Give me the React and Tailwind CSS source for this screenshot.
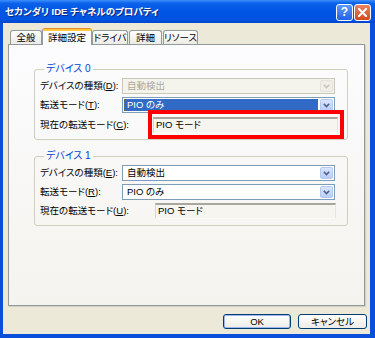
import React from "react";

function Chevron({ color }) {
  return (
    <svg width="7" height="5" viewBox="0 0 7 5">
      <path d="M0.8 0.8 L3.5 3.6 L6.2 0.8" fill="none" stroke={color} strokeWidth="1.6" />
    </svg>
  );
}

function Combo({ text, variant }) {
  const outer =
    variant === "disabled"
      ? "flex h-[16px] w-[213px] items-stretch border border-[#c9c7ba] bg-[#f4f3ec]"
      : "flex h-[16px] w-[213px] items-stretch border border-[#7f9db9] bg-white";
  const inner =
    variant === "selected"
      ? "flex flex-1 items-center border border-dotted border-[#7a6d3a] bg-[#316ac5] pl-[2px] text-white"
      : variant === "disabled"
      ? "flex flex-1 items-center pl-[3px] text-[#aca899]"
      : "flex flex-1 items-center pl-[3px] text-black";
  const btn =
    variant === "disabled"
      ? "m-[1px] flex w-[13px] items-center justify-center rounded-[2px] border border-[#e4e2d8] bg-[#efeee7]"
      : "m-[1px] flex w-[13px] items-center justify-center rounded-[2px] border border-[#b5c8f2] bg-[linear-gradient(to_bottom,#dbe6fd,#b9cdf8)]";
  return (
    <div className={outer}>
      <div className="flex flex-1 p-[1px]">
        <div className={inner}>{text}</div>
      </div>
      <div className={btn}>
        <Chevron color={variant === "disabled" ? "#c9c6b6" : "#4d6185"} />
      </div>
    </div>
  );
}

function Field({ text, width }) {
  return (
    <div
      className={`flex h-[16px] items-center border-t-2 border-l border-r border-b border-t-[#a9a79c] border-l-[#d8d5ca] border-r-[#e9e7dd] border-b-[#fbfbf8] bg-[#f6f5f0] pl-[2px] text-black ${width}`}
    >
      {text}
    </div>
  );
}

function Group({ title, rows, className }) {
  return (
    <fieldset className={`w-[314px] rounded-[3px] border border-[#d0d0bf] pb-[6px] pl-[5px] pt-[3px] ${className}`}>
      <legend className="ml-[4px] px-[2px] text-[10px] leading-[12px] text-[#0046d5]">{title}</legend>
      <div className="flex flex-col gap-[3px]">{rows}</div>
    </fieldset>
  );
}

function Label({ children, mn, w }) {
  return (
    <div className={`${w} shrink-0 whitespace-nowrap leading-[12px]`}>
      {children}(<u>{mn}</u>):
    </div>
  );
}

export default function App() {
  return (
    <div className="flex h-[338px] w-[375px] flex-col overflow-hidden bg-[#0a4fdc] font-['Liberation_Sans','Noto_Sans_CJK_JP',sans-serif] text-[9.5px] text-black [font-feature-settings:'palt']">
      {/* Title bar */}
      <div className="flex h-[23px] shrink-0 items-center bg-[linear-gradient(to_bottom,#3d8ffa_0%,#0b62ea_14%,#0055e4_50%,#0052e0_85%,#0046cc_100%)] pl-[5px] pr-[4px]">
        <div className="flex-1 whitespace-nowrap text-[9.5px] font-bold leading-none text-white [text-shadow:1px_1px_0_#0a2a80]">
          セカンダリ IDE チャネルのプロパティ
        </div>
        <div className="flex gap-[1px] pt-[1px]">
          <div className="flex h-[17px] w-[17px] items-center justify-center rounded-[3px] border border-white bg-[linear-gradient(to_bottom,#5b9bfb,#2361e6)] text-[12px] font-bold leading-none text-white">
            ?
          </div>
          <div className="flex h-[17px] w-[17px] items-center justify-center rounded-[3px] border border-white bg-[linear-gradient(to_bottom,#ea8560,#d24a1c)]">
            <svg width="9" height="9" viewBox="0 0 9 9">
              <path d="M1 1 L8 8 M8 1 L1 8" stroke="white" strokeWidth="2" strokeLinecap="square" />
            </svg>
          </div>
        </div>
      </div>

      {/* Client area */}
      <div className="mb-[4px] ml-[3px] mr-[5px] flex flex-1 flex-col bg-[#ece9d8] pt-[5px]">
        {/* Tabs */}
        <div className="relative z-10 ml-[7px] flex h-[16px] items-end">
          <div className="flex h-[14px] w-[32px] items-center justify-center whitespace-nowrap rounded-t-[3px] border border-b-0 border-[#919b9c] bg-[linear-gradient(to_bottom,#fefefe,#ecebe5)] leading-none">
            全般
          </div>
          <div className="-mb-[1px] flex h-[17px] w-[50px] flex-col rounded-t-[3px] border border-b-0 border-[#919b9c] border-t-[#e68b2c] bg-[#fcfcfe]">
            <div className="h-[2px] bg-[#ffc73c]" />
            <div className="flex flex-1 items-center justify-center whitespace-nowrap leading-none">詳細設定</div>
          </div>
          <div className="flex h-[14px] w-[36px] items-center justify-center whitespace-nowrap rounded-t-[3px] border border-b-0 border-[#919b9c] bg-[linear-gradient(to_bottom,#fefefe,#ecebe5)] leading-none">
            ドライバ
          </div>
          <div className="ml-[1px] flex h-[14px] w-[33px] items-center justify-center whitespace-nowrap rounded-t-[3px] border border-b-0 border-[#919b9c] bg-[linear-gradient(to_bottom,#fefefe,#ecebe5)] leading-none">
            詳細
          </div>
          <div className="ml-[1px] flex h-[14px] w-[35px] items-center justify-center whitespace-nowrap rounded-t-[3px] border border-b-0 border-[#919b9c] bg-[linear-gradient(to_bottom,#fefefe,#ecebe5)] leading-none">
            リソース
          </div>
        </div>

        {/* Panel */}
        <div className="ml-[5px] mr-[5px] flex h-[262px] flex-col border border-[#919b9c] bg-[linear-gradient(to_bottom,#fcfcfe,#f4f3ee)] pl-[25px] pt-[18px] shadow-[1px_1px_0_#d0cfc6]">
          <Group
            title="デバイス 0"
            rows={[
              <div key="a" className="flex items-center">
                <Label mn="D" w="w-[82px]">デバイスの種類</Label>
                <Combo text="自動検出" variant="disabled" />
              </div>,
              <div key="b" className="flex items-center">
                <Label mn="T" w="w-[82px]">転送モード</Label>
                <Combo text="PIO のみ" variant="selected" />
              </div>,
              <div key="c" className="mt-[1px] flex items-center">
                <Label mn="C" w="w-[113px]">現在の転送モード</Label>
                <div className="relative">
                  <Field text="PIO モード" width="w-[185px]" />
                  <div className="pointer-events-none absolute -bottom-[6px] -left-[5px] -right-[6px] -top-[7px] border-4 border-[#ff0000]" />
                </div>
              </div>,
            ]}
          />
          <Group
            title="デバイス 1"
            className="mt-[10px]"
            rows={[
              <div key="a" className="flex items-center">
                <Label mn="E" w="w-[82px]">デバイスの種類</Label>
                <Combo text="自動検出" variant="normal" />
              </div>,
              <div key="b" className="flex items-center">
                <Label mn="R" w="w-[82px]">転送モード</Label>
                <Combo text="PIO のみ" variant="normal" />
              </div>,
              <div key="c" className="flex items-center">
                <Label mn="U" w="w-[115px]">現在の転送モード</Label>
                <Field text="PIO モード" width="w-[181px]" />
              </div>,
            ]}
          />
        </div>

        {/* Buttons */}
        <div className="mt-[8px] flex justify-end gap-[7px] pr-[3px]">
          <div className="flex h-[15px] w-[68px] items-center justify-center rounded-[3px] border border-[#003c74] bg-[linear-gradient(to_bottom,#ffffff,#ecebe6)] leading-none shadow-[inset_0_0_0_1px_#9bb7f0]">
            OK
          </div>
          <div className="flex h-[15px] w-[69px] items-center justify-center rounded-[3px] border border-[#003c74] bg-[linear-gradient(to_bottom,#ffffff,#ecebe6)] leading-none">
            キャンセル
          </div>
        </div>
      </div>
    </div>
  );
}
